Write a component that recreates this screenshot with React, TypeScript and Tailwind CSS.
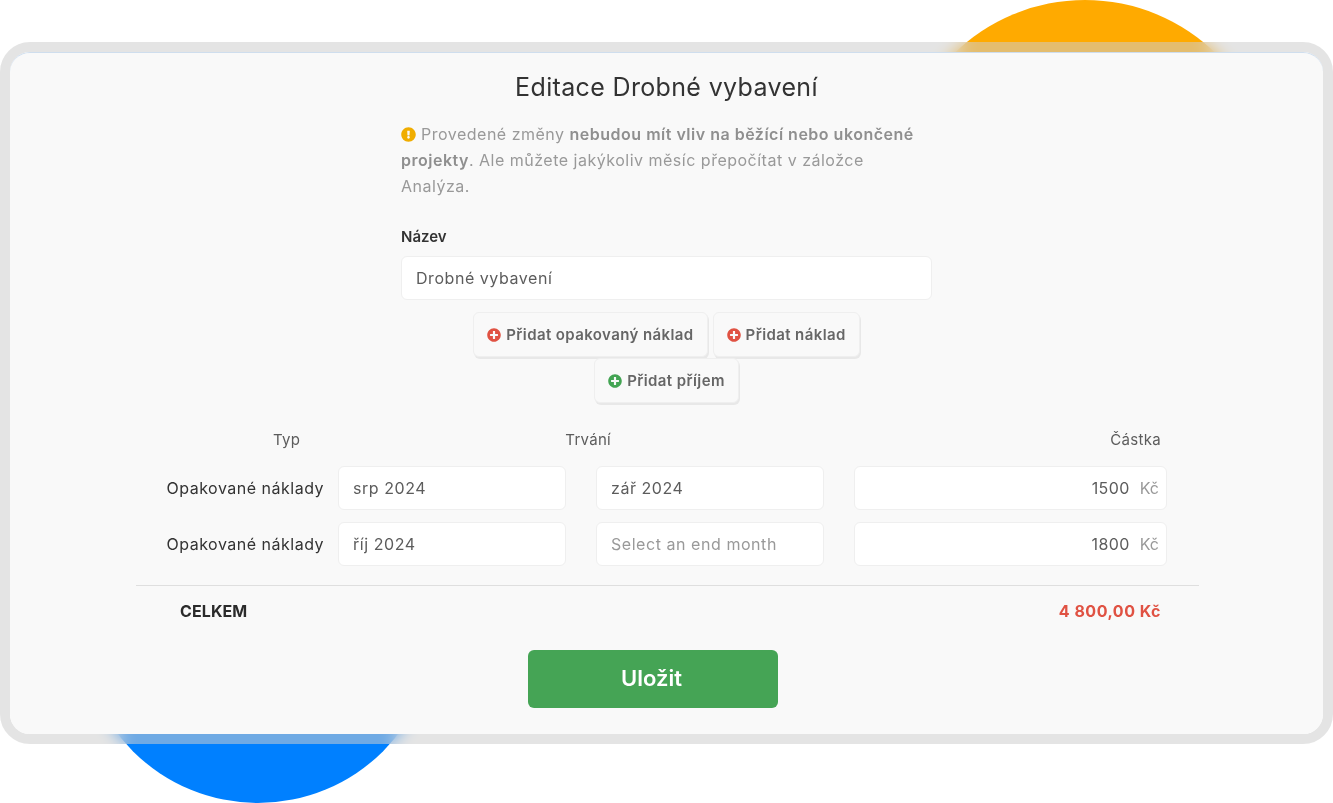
import { FaExclamationCircle, FaPlusCircle } from "react-icons/fa";

type Row = { from: string; to: string; amount: string };

const rows: Row[] = [
  { from: "srp 2024", to: "zář 2024", amount: "1500" },
  { from: "říj 2024", to: "", amount: "1800" },
];

const fieldCls =
  "flex h-[44px] items-center rounded-md border border-[#efefef] bg-white px-[14px] text-[16px] text-[#5c5c5c]";

function AddButton({ label, green }: { label: string; green?: boolean }) {
  return (
    <button className="flex h-[45px] items-center gap-[5px] rounded-md border border-[#efefef] bg-[#f9f9f9] pl-[13px] pr-[13px] text-[15px] font-semibold tracking-[0.4px] text-[#666666] shadow-[1px_2px_0_#e8e8e8]">
      <FaPlusCircle className={green ? "text-[14px] text-[#43a453]" : "text-[14px] text-[#e05243]"} />
      <span className="pt-[1px]">{label}</span>
    </button>
  );
}

export default function App() {
  return (
    <div className="relative h-[803px] w-[1333px] overflow-hidden bg-white font-['Inter',sans-serif]">
      {/* blobs behind the frosted window edge */}
      <div className="absolute left-[898px] top-0 h-[374px] w-[374px] rounded-full bg-[#ffaa00]" />
      <div className="absolute left-[81px] top-[449px] h-[354px] w-[354px] rounded-full bg-[#0080ff]" />

      <div className="absolute left-0 top-[42px] h-[702px] w-[1333px] rounded-[30px] border-[10px] border-[rgba(205,205,205,0.54)] backdrop-blur-[8px]">
        <div className="flex h-full flex-col items-center rounded-[20px] border-t border-t-[#cfdeee] bg-[#f9f9f9] [background-clip:padding-box]">
          <h1 className="mt-[16px] h-[36px] text-[25px] leading-[36px] tracking-[0.35px] text-[#333333]">
            Editace Drobné vybavení
          </h1>

          <div className="mt-[16px] w-[531px]">
            <p className="w-[520px] text-[16px] leading-[26px] tracking-[0.5px] text-[#999999]">
              <FaExclamationCircle className="mr-[5px] inline-block align-[-2px] text-[15px] text-[#f0ad00]" />
              Provedené změny <b className="font-semibold text-[#8f8f8f]">nebudou mít vliv na běžící nebo ukončené projekty</b>. Ale můžete jakýkoliv měsíc přepočítat v záložce Analýza.
            </p>
            <div className="mt-[28px] text-[15px] font-semibold leading-[20px] text-[#333333]">Název</div>
            <div className={`mt-[9px] tracking-[0.55px] ${fieldCls}`}>Drobné vybavení</div>
          </div>

          <div className="mt-[12px] flex w-[534px] flex-wrap justify-center gap-x-[5px] gap-y-[1px]">
            <AddButton label="Přidat opakovaný náklad" />
            <AddButton label="Přidat náklad" />
            <AddButton label="Přidat příjem" green />
          </div>

          <div className="mt-[26px] ml-[126px] w-[1063px] self-start">
            <div className="flex h-[22px] items-center text-[15px] tracking-[0.3px] text-[#5c5c5c]">
              <span className="ml-[137px]">Typ</span>
              <span className="ml-[265px]">Trvání</span>
              <span className="ml-auto mr-[38px]">Částka</span>
            </div>
            <div className="mt-[15px] flex flex-col gap-[12px]">
              {rows.map((r) => (
                <div key={r.amount} className="flex items-center">
                  <div className="w-[188px] text-right text-[16px] tracking-[0.5px] text-[#333333]">Opakované náklady</div>
                  <div className={`ml-[14px] w-[228px] tracking-[0.55px] ${fieldCls}`}>{r.from}</div>
                  <div className={`ml-[30px] w-[228px] tracking-[0.55px] ${fieldCls}`}>
                    {r.to || <span className="text-[#999999]">Select an end month</span>}
                  </div>
                  <div className={`ml-[30px] w-[313px] justify-end !pr-[7px] tracking-[0.4px] ${fieldCls}`}>
                    {r.amount}
                    <span className="ml-[10px] tracking-normal text-[#999999]">Kč</span>
                  </div>
                </div>
              ))}
            </div>
            <div className="mt-[19px] flex h-[51px] items-center border-t border-[#dfdfdf] text-[16px] font-bold">
              <span className="ml-[44px] tracking-[0.1px] text-[#2b2b2b]">CELKEM</span>
              <span className="ml-auto mr-[38px] tracking-[0.5px] text-[#e05243]">4 800,00 Kč</span>
            </div>
          </div>

          <button className="mt-[14px] ml-[518px] h-[58px] w-[250px] self-start rounded-md bg-[#45a455] pb-[2px] pr-[3px] text-[22px] font-semibold text-white">
            Uložit
          </button>
        </div>
      </div>
    </div>
  );
}
